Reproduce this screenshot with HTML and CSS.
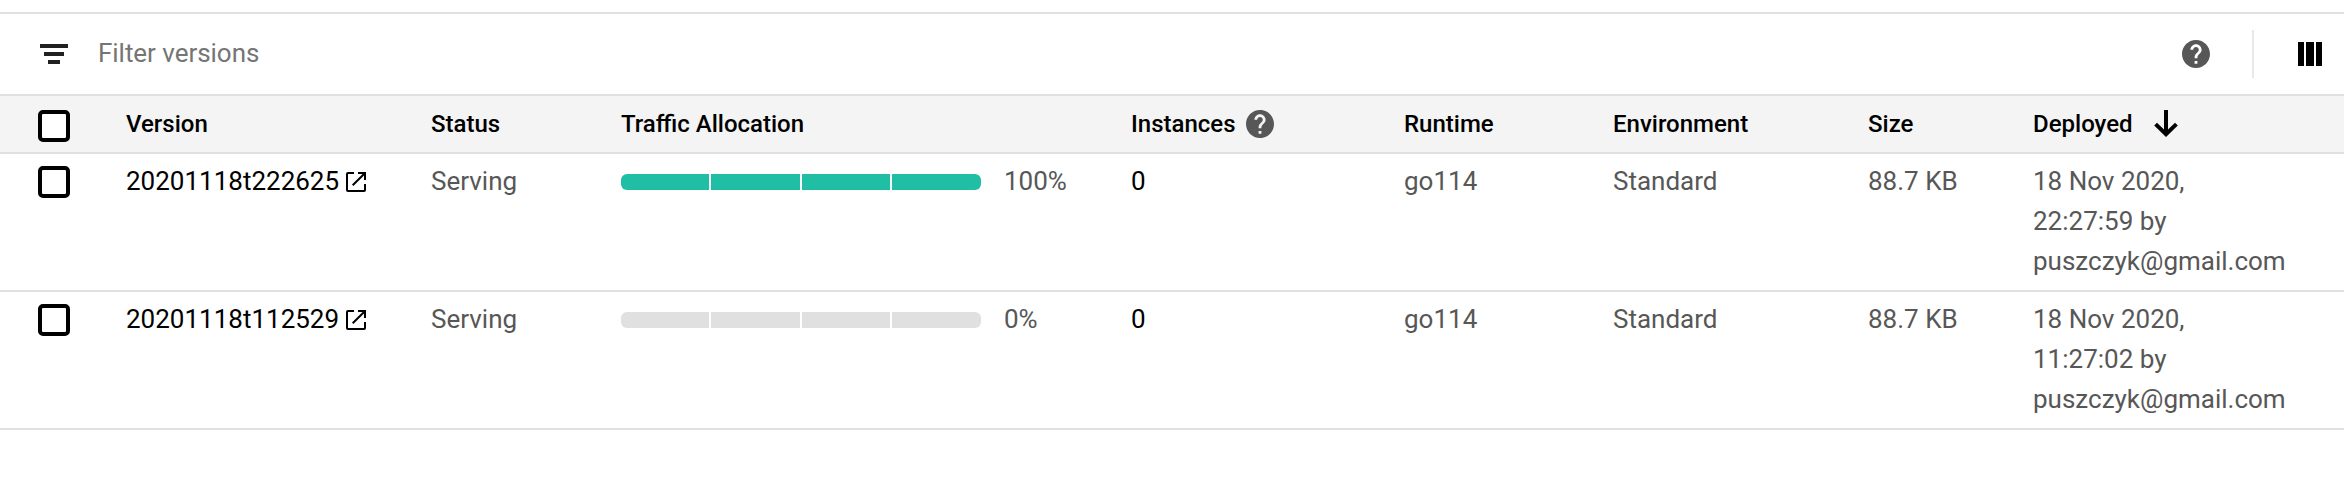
FILE: index.html
```html
<!DOCTYPE html>
<html lang="en">
<head>
<meta charset="utf-8">
<title>Versions</title>
<link rel="stylesheet" href="styles.css">
</head>
<body>
<svg class="defs" width="0" height="0">
  <symbol id="help" viewBox="2 2 20 20"><path d="M12 2C6.48 2 2 6.48 2 12s4.480 10 10 10 10-4.480 10-10S17.520 2 12 2zm1 17h-2v-2h2v2zm2.070-7.750l-.9.920C13.450 12.900 13 13.500 13 15h-2v-.5c0-1.100.45-2.100 1.170-2.830l1.240-1.260c.37-.36.59-.86.59-1.410 0-1.100-.9-2-2-2s-2 .9-2 2H8c0-2.210 1.790-4 4-4s4 1.790 4 4c0 .88-.36 1.680-.93 2.250z"/></symbol>
  <symbol id="launch" viewBox="0 0 20 20"><path d="M8 0v2H2v16h16v-6h2v6a2 2 0 0 1-2 2H2a2 2 0 0 1-2-2V2a2 2 0 0 1 2-2zM12 0h8v8h-2V3.400L7.400 14 6 12.600 16.600 2H12z"/></symbol>
</svg>
<main class="versions">
  <div class="toolbar">
    <svg class="filter-icon" viewBox="0 0 28 20"><path d="M0 0h28v4H0zM4 8h20v4H4zM8 16h12v4H8z"/></svg>
    <span class="filter-text">Filter versions</span>
    <svg class="help toolbar-help"><use href="#help"/></svg>
    <span class="divider"></span>
    <svg class="columns-icon" viewBox="0 0 24 24"><path d="M0 0h6v24H0zM8 0h8v24H8zM18 0h6v24h-6z"/></svg>
  </div>
  <div class="row head">
    <span class="checkbox"></span>
    <span>Version</span>
    <span>Status</span>
    <span>Traffic Allocation</span>
    <span class="with-icon">Instances<svg class="help"><use href="#help"/></svg></span>
    <span>Runtime</span>
    <span>Environment</span>
    <span>Size</span>
    <span class="with-icon">Deployed<svg class="sort" viewBox="0 0 24 27"><path d="M10 0h4v19.500l7-6.700 2.800 2.800L12 27 .2 15.600 3 12.800l7 6.700z"/></svg></span>
  </div>
  <div class="row">
    <span class="checkbox"></span>
    <span class="strong link">20201118t222625<svg class="launch"><use href="#launch"/></svg></span>
    <span>Serving</span>
    <span class="traffic"><span class="bar full"><i></i><i></i><i></i><i></i></span>100%</span>
    <span class="strong">0</span>
    <span>go114</span>
    <span>Standard</span>
    <span>88.7 KB</span>
    <span>18 Nov 2020,<br>22:27:59 by<br>puszczyk@gmail.com</span>
  </div>
  <div class="row">
    <span class="checkbox"></span>
    <span class="strong link">20201118t112529<svg class="launch"><use href="#launch"/></svg></span>
    <span>Serving</span>
    <span class="traffic"><span class="bar"><i></i><i></i><i></i><i></i></span>0%</span>
    <span class="strong">0</span>
    <span>go114</span>
    <span>Standard</span>
    <span>88.7 KB</span>
    <span>18 Nov 2020,<br>11:27:02 by<br>puszczyk@gmail.com</span>
  </div>
</main>
</body>
</html>
```
FILE: styles.css
```css
body {
  margin: 0;
  background: #fff;
  font: 26px/40px Roboto, sans-serif;
  color: #575757;
}
.defs { display: block; }
.versions { padding-top: 12px; }
.toolbar {
  box-sizing: border-box;
  height: 84px;
  border-top: 2px solid #e0e0e0;
  border-bottom: 2px solid #e0e0e0;
  display: flex;
  align-items: center;
  padding: 0 22px 0 40px;
}
.filter-icon { width: 28px; height: 20px; fill: #212121; }
.filter-text { margin: -2px auto 0 30px; color: #757575; letter-spacing: -0.04px; }
.help { width: 28px; height: 28px; fill: #575757; flex: none; }
.toolbar-help { margin-right: 42px; }
.divider { width: 2px; height: 48px; background: #e8e8e8; margin-right: 44px; }
.columns-icon { width: 24px; height: 24px; fill: #000; }
.row {
  display: grid;
  grid-template-columns: 88px 305px 190px 510px 273px 209px 255px 165px 1fr;
  align-items: start;
  padding: 7px 0 9px 38px;
  border-bottom: 2px solid #e0e0e0;
}
.head {
  padding: 8px 0 8px 38px;
  background: #f4f4f4;
  color: #000;
  font-size: 24px;
  font-weight: 500;
}
.checkbox {
  box-sizing: border-box;
  width: 32px;
  height: 32px;
  margin-top: 5px;
  border: 4px solid #000;
  border-radius: 5px;
  background: #fff;
}
.head .checkbox { margin-top: 6px; }
.strong { color: #000; }
.with-icon, .link, .traffic { display: flex; }
.with-icon .help { margin: 6px 0 0 10px; }
.sort { width: 24px; height: 27px; margin: 6px 0 0 21px; }
.launch { width: 20px; height: 20px; margin: 11px 0 0 7px; }
.bar {
  display: grid;
  grid-template-columns: 88px 89px 88px 89px;
  gap: 2px;
  width: 360px;
  height: 16px;
  margin: 13px 23px 0 0;
  border-radius: 6px;
  overflow: hidden;
}
.bar i { background: #e0e0e0; }
.full i { background: #1fbea5; }
```
